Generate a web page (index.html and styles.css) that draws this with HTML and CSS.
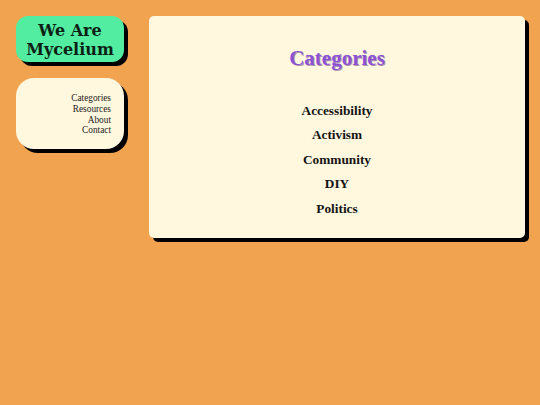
FILE: index.html
```html
<!DOCTYPE html>
<html lang="en">
<head>
<meta charset="utf-8">
<title>We Are Mycelium - Categories</title>
<link rel="stylesheet" href="styles.css">
</head>
<body>
<div class="page">
  <aside class="sidebar">
    <div class="logo">
      <span class="logo-line">We Are</span>
      <span class="logo-line">Mycelium</span>
    </div>
    <nav class="nav">
      <a href="#">Categories</a>
      <a href="#">Resources</a>
      <a href="#">About</a>
      <a href="#">Contact</a>
    </nav>
  </aside>
  <main class="main">
    <h1 class="title">Categories</h1>
    <ul class="cats">
      <li>Accessibility</li>
      <li>Activism</li>
      <li>Community</li>
      <li>DIY</li>
      <li>Politics</li>
    </ul>
  </main>
</div>
</body>
</html>
```

FILE: styles.css
```css
html, body {
  margin: 0;
  padding: 0;
  background: #f1a350;
}

body {
  font-family: "Liberation Serif", "Times New Roman", serif;
  color: #161616;
}

.page {
  display: flex;
  align-items: flex-start;
  gap: 25px;
  padding: 16px 15px 16px 16px;
}

.sidebar {
  width: 108px;
  flex: none;
  display: flex;
  flex-direction: column;
  gap: 16px;
}

.logo {
  height: 46px;
  box-sizing: border-box;
  padding-top: 1px;
  background: #52eda1;
  border-radius: 12px;
  box-shadow: 4px 4px 0 #000;
  display: flex;
  flex-direction: column;
  align-items: center;
  justify-content: center;
  text-align: center;
  font-family: "DejaVu Serif", serif;
  font-weight: bold;
  font-size: 16px;
  color: #0c1f15;
}

.logo-line {
  display: block;
  line-height: 19px;
}

.nav {
  height: 71px;
  box-sizing: border-box;
  background: #fff7de;
  border-radius: 18px;
  box-shadow: 4px 4px 0 #000;
  padding: 15px 13px 0 0;
  display: flex;
  flex-direction: column;
  align-items: flex-end;
  font-size: 9.3px;
  line-height: 10.8px;
}

.nav a {
  color: #1a1a1a;
  text-decoration: none;
}

.main {
  flex: 1;
  background: #fff7de;
  border-radius: 5px;
  box-shadow: 4px 4px 0 #000;
  padding: 30px 0 17px;
  text-align: center;
}

.title {
  margin: 0 0 28px;
  font-size: 21px;
  line-height: 24.5px;
  font-weight: bold;
  color: #8c52d5;
  text-shadow: 1px 1px 0 rgba(70, 30, 110, 0.45);
}

.cats {
  list-style: none;
  margin: 0;
  padding: 0;
  font-weight: bold;
  font-size: 13.3px;
  line-height: 24.5px;
  color: #141414;
}
```
